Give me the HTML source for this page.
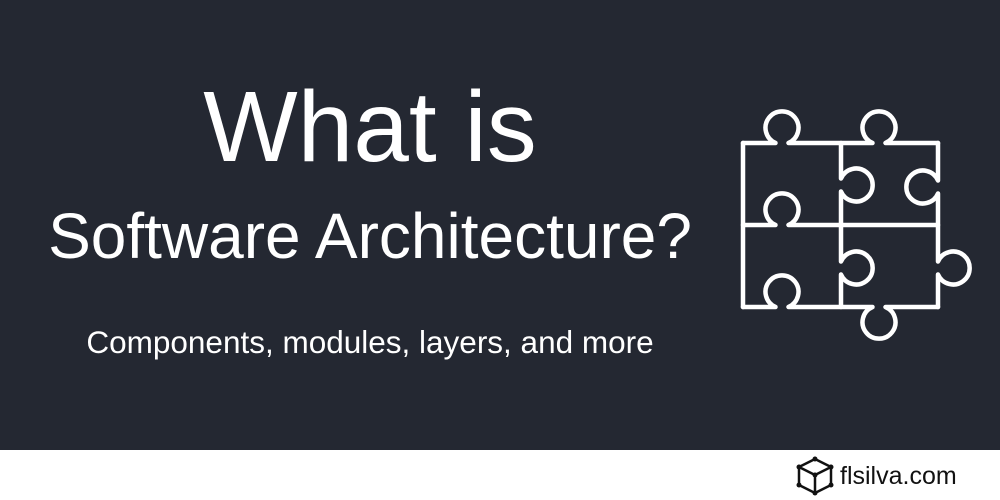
<!DOCTYPE html>
<html><head><style>
html,body{margin:0;padding:0;width:1000px;height:500px;overflow:hidden;background:#fff;font-family:"Liberation Sans",sans-serif}
.dark{position:absolute;left:0;top:0;width:1000px;height:450px;background:#242832}
.t{position:absolute;color:#fff;white-space:nowrap;text-align:center;left:0;width:740px}
</style></head><body>
<div class="dark"></div>
<div class="t" style="top:72px;font-size:100px;line-height:110px">What is</div>
<div class="t" style="top:201px;font-size:64px;line-height:70px">Software Architecture?</div>
<div class="t" style="top:322px;font-size:31.5px;line-height:40px">Components, modules, layers, and more</div>
<svg style="position:absolute;left:0;top:0" width="1000" height="500">
<g fill="none" stroke="#fff" stroke-width="4.5" stroke-linejoin="round" stroke-linecap="round">
<path d="M743 143 H775.5 A16.5 16.5 0 1 1 788.5 143 H872.5 A16.5 16.5 0 1 1 885.5 143 H938"/>
<path d="M743 225 H775.5 A16.5 16.5 0 1 1 788.5 225 H938"/>
<path d="M743 307 H775.5 A16.5 16.5 0 1 1 788.5 307 H872.5 A16.5 16.5 0 1 0 885.5 307 H938"/>
<path d="M743 143 V307"/>
<path d="M841 143 V178.5 A16.5 16.5 0 1 1 841 191.5 V261.5 A16.5 16.5 0 1 1 841 274.5 V307"/>
<path d="M938 143 V180.5 A16.5 16.5 0 1 0 938 193.5 V261.5 A16.5 16.5 0 1 1 938 274.5 V307"/>
</g>
<g fill="none" stroke="#111" stroke-width="2.5" stroke-linejoin="round">
<path d="M815 459 L831 467 V485 L815 493 L799 485 V467 Z M799 467 L815 475 L831 467 M815 475 V493"/>
</g>
<g fill="#111"><circle cx="815" cy="459" r="2.5"/><circle cx="831" cy="467" r="2.5"/><circle cx="831" cy="485" r="2.5"/><circle cx="815" cy="493" r="2.5"/><circle cx="799" cy="485" r="2.5"/><circle cx="799" cy="467" r="2.5"/><circle cx="815" cy="475" r="2.5"/></g>
<text x="840" y="484" font-family="Liberation Sans" font-size="25" fill="#111">flsilva.com</text>
</svg>
</body></html>
